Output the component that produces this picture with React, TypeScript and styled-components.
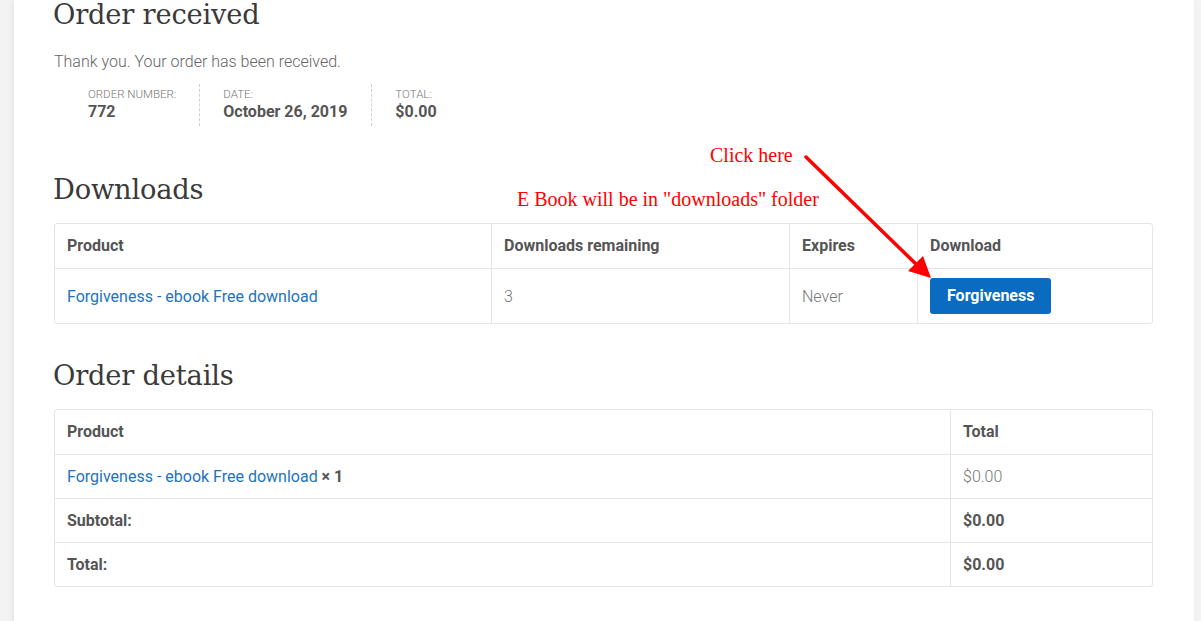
import styled, { createGlobalStyle } from "styled-components";

const GlobalStyle = createGlobalStyle`
  html, body {
    margin: 0;
    padding: 0;
    background: #f3f3f3;
  }
  body {
    font-family: Roboto, "Liberation Sans", sans-serif;
    color: #555;
  }
`;

const Page = styled.div`
  padding: 0 7px 0 14px;
  height: 621px;
  overflow: hidden;
`;

const Card = styled.div`
  position: relative;
  display: flow-root;
  background: #fff;
  box-shadow: -2px 0 6px rgba(0, 0, 0, 0.06);
  padding: 0 41px 40px 40px;
  min-height: 621px;
  box-sizing: border-box;
`;

const Heading = styled.h2<{ top?: number }>`
  font-family: "DejaVu Serif", "Liberation Serif", serif;
  font-weight: 400;
  font-size: 27.3px;
  line-height: 36px;
  color: #3a3a3a;
  margin: ${(p) => p.top ?? 0}px 0 0 -1px;
  letter-spacing: -0.2px;
`;

const Intro = styled.p`
  margin: 17px 0 0;
  font-size: 16px;
  font-weight: 300;
  line-height: 24px;
  color: #666;
`;

const Overview = styled.ul`
  list-style: none;
  display: flex;
  margin: 10px 0 0;
  padding: 0 0 0 34px;
`;

const OverviewItem = styled.li`
  display: flex;
  flex-direction: column;
  padding: 3px 24px 4px 0;
  margin-right: 23px;
  border-right: 1px dashed #d3ced2;
  &:first-child {
    padding-right: 23px;
  }
  &:last-child {
    border-right: none;
  }
`;

const OverviewLabel = styled.span`
  font-size: 11.5px;
  font-weight: 300;
  line-height: 14px;
  color: #777;
  text-transform: uppercase;
`;

const OverviewValue = styled.strong`
  font-size: 16px;
  font-weight: 700;
  line-height: 21px;
  color: #555;
`;

const Table = styled.table`
  width: 100%;
  border-collapse: separate;
  border-spacing: 0;
  border: 1px solid #e5e5e5;
  border-radius: 3px;
  margin-top: 15px;
  font-size: 16px;
  table-layout: fixed;
`;

const Th = styled.th<{ pad?: number }>`
  text-align: left;
  font-weight: 700;
  color: #555;
  line-height: 20px;
  padding: ${(p) => p.pad ?? 12}px 12px;
  border-left: 1px solid #e5e5e5;
  &:first-child {
    border-left: none;
  }
`;

const Td = styled.td<{ pad?: number; strong?: boolean }>`
  line-height: 21px;
  padding: ${(p) => p.pad ?? 11}px 12px;
  border-left: 1px solid #e5e5e5;
  border-top: 1px solid #e5e5e5;
  color: ${(p) => (p.strong ? "#555" : "#777")};
  font-weight: ${(p) => (p.strong ? 700 : 300)};
  &:first-child {
    border-left: none;
  }
`;

const Link = styled.a`
  color: #1e73be;
  font-weight: 400;
  text-decoration: none;
`;

const Qty = styled.strong`
  color: #555;
  font-weight: 700;
`;

const DownloadButton = styled.a`
  display: inline-block;
  background: #0a6bc1;
  color: #fff;
  font-weight: 700;
  font-size: 16px;
  line-height: 36px;
  height: 36px;
  padding: 0 17px;
  border-radius: 3px;
  text-decoration: none;
`;

const Note = styled.span<{ x: number; y: number }>`
  position: absolute;
  left: ${(p) => p.x}px;
  top: ${(p) => p.y}px;
  font-family: "Liberation Serif", serif;
  font-size: 20px;
  line-height: 24px;
  color: #f00;
  white-space: nowrap;
`;

const ArrowLayer = styled.svg`
  position: absolute;
  left: 0;
  top: 0;
  pointer-events: none;
`;

const App = () => {
  return (
    <>
      <GlobalStyle />
      <Page>
        <Card>
          <Heading top={-3}>Order received</Heading>
          <Intro>Thank you. Your order has been received.</Intro>
          <Overview>
            <OverviewItem>
              <OverviewLabel>Order number:</OverviewLabel>
              <OverviewValue>772</OverviewValue>
            </OverviewItem>
            <OverviewItem>
              <OverviewLabel>Date:</OverviewLabel>
              <OverviewValue>October 26, 2019</OverviewValue>
            </OverviewItem>
            <OverviewItem>
              <OverviewLabel>Total:</OverviewLabel>
              <OverviewValue>$0.00</OverviewValue>
            </OverviewItem>
          </Overview>

          <Heading top={46}>Downloads</Heading>
          <Table>
            <colgroup>
              <col style={{ width: 436 }} />
              <col style={{ width: 298 }} />
              <col style={{ width: 128 }} />
              <col />
            </colgroup>
            <thead>
              <tr>
                <Th>Product</Th>
                <Th>Downloads remaining</Th>
                <Th>Expires</Th>
                <Th>Download</Th>
              </tr>
            </thead>
            <tbody>
              <tr>
                <Td pad={9}>
                  <Link href="#">Forgiveness - ebook Free download</Link>
                </Td>
                <Td pad={9}>3</Td>
                <Td pad={9}>Never</Td>
                <Td pad={9}>
                  <DownloadButton href="#">Forgiveness</DownloadButton>
                </Td>
              </tr>
            </tbody>
          </Table>

          <Heading top={34}>Order details</Heading>
          <Table>
            <colgroup>
              <col style={{ width: 895 }} />
              <col />
            </colgroup>
            <thead>
              <tr>
                <Th>Product</Th>
                <Th>Total</Th>
              </tr>
            </thead>
            <tbody>
              <tr>
                <Td>
                  <Link href="#">Forgiveness - ebook Free download</Link>{" "}
                  <Qty>× 1</Qty>
                </Td>
                <Td>$0.00</Td>
              </tr>
              <tr>
                <Td strong>Subtotal:</Td>
                <Td strong>$0.00</Td>
              </tr>
              <tr>
                <Td strong>Total:</Td>
                <Td strong>$0.00</Td>
              </tr>
            </tbody>
          </Table>

          {/* hand-drawn annotation over the page */}
          <Note x={696} y={143}>
            Click here
          </Note>
          <Note x={503} y={187}>
            E Book will be in "downloads" folder
          </Note>
          <ArrowLayer width="1180" height="621">
            <line x1="792" y1="157" x2="905" y2="267" stroke="#f00" strokeWidth="3.5" strokeLinecap="round" />
            <polygon points="917,278 894,271 909,256" fill="#f00" />
          </ArrowLayer>
        </Card>
      </Page>
    </>
  );
};

export default App;
